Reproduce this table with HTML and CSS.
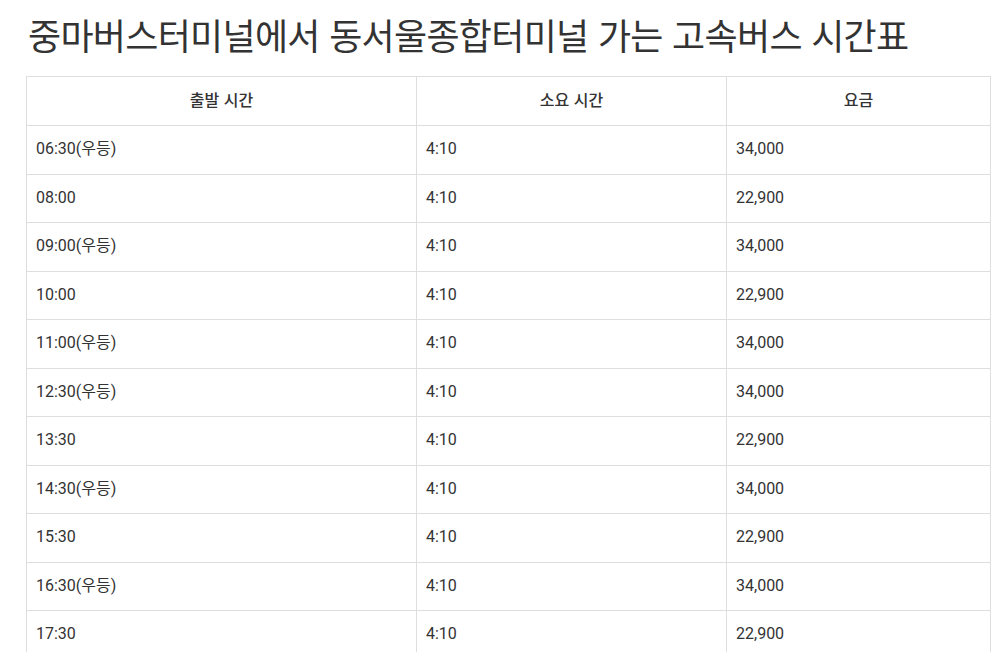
FILE: index.html
```html
<!DOCTYPE html>
<html lang="ko">
<head>
<meta charset="utf-8">
<link rel="stylesheet" href="styles.css">
</head>
<body>
<main class="page">
  <h1 class="title">중마버스터미널에서 동서울종합터미널 가는 고속버스 시간표</h1>
  <table class="schedule">
    <colgroup>
      <col class="c1"><col class="c2"><col class="c3">
    </colgroup>
    <thead>
      <tr><th>출발 시간</th><th>소요 시간</th><th>요금</th></tr>
    </thead>
    <tbody>
      <tr><td>06:30(우등)</td><td>4:10</td><td>34,000</td></tr>
      <tr><td>08:00</td><td>4:10</td><td>22,900</td></tr>
      <tr><td>09:00(우등)</td><td>4:10</td><td>34,000</td></tr>
      <tr><td>10:00</td><td>4:10</td><td>22,900</td></tr>
      <tr><td>11:00(우등)</td><td>4:10</td><td>34,000</td></tr>
      <tr><td>12:30(우등)</td><td>4:10</td><td>34,000</td></tr>
      <tr><td>13:30</td><td>4:10</td><td>22,900</td></tr>
      <tr><td>14:30(우등)</td><td>4:10</td><td>34,000</td></tr>
      <tr><td>15:30</td><td>4:10</td><td>22,900</td></tr>
      <tr><td>16:30(우등)</td><td>4:10</td><td>34,000</td></tr>
      <tr><td>17:30</td><td>4:10</td><td>22,900</td></tr>
    </tbody>
  </table>
</main>
</body>
</html>
```
FILE: styles.css
```css
html, body { margin: 0; padding: 0; background: #fff; }
body { font-family: Roboto, "Noto Sans CJK KR", sans-serif; color: #333; }
.page { padding: 0 0 0 26px; }
.title {
  margin: 0;
  padding: 10px 0 0 2px;
  height: 76px;
  box-sizing: border-box;
  font-family: "Noto Sans CJK KR", sans-serif;
  font-weight: 400;
  font-size: 36px;
  line-height: 48px;
  letter-spacing: -0.7px;
  color: #333;
}
.schedule {
  border-collapse: collapse;
  table-layout: fixed;
  width: 965px;
  font-size: 16px;
}
.c1 { width: 390px; }
.c2 { width: 310px; }
.c3 { width: 264px; }
.schedule th, .schedule td {
  border: 1px solid #dedede;
  padding: 12px 9px;
  line-height: 23.5px;
  text-align: left;
  color: #333;
}
.schedule td { padding: 11px 9px 13px; }
.schedule th {
  text-align: center;
  font-family: "Noto Sans CJK KR", sans-serif;
  font-weight: 500;
  font-size: 16px;
  padding: 10px 9px 14px;
  line-height: 24px;
}
```
